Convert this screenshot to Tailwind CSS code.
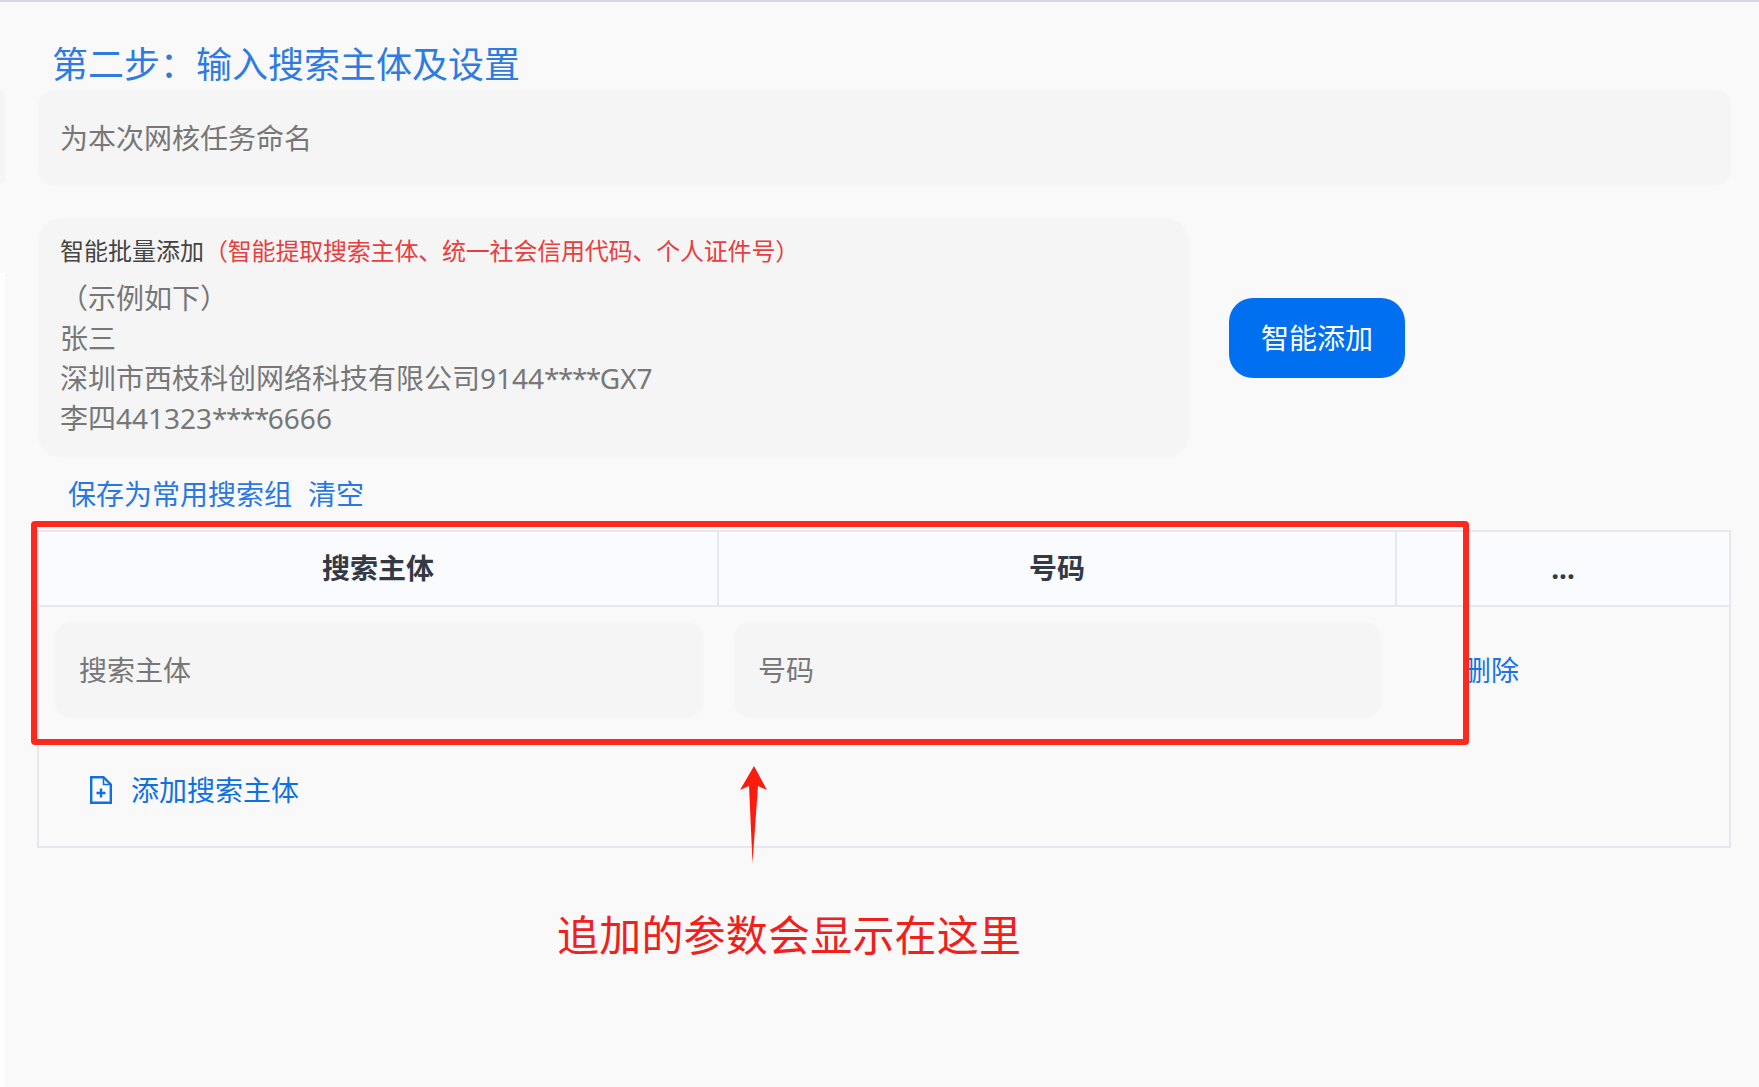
<!DOCTYPE html>
<html lang="zh-CN">
<head>
  <meta charset="UTF-8">
  <title>第二步</title>
  <script src="https://cdn.jsdelivr.net/npm/@tailwindcss/browser@4"></script>
</head>
<body class="relative h-[1087px] overflow-hidden bg-[#f9f9f9] font-['Noto_Sans','Noto_Sans_CJK_SC',sans-serif] text-[28px] text-[#777]">
  <div class="h-[2px] bg-[#d8d8de]"></div>

  <!-- cut off card of the previous step, left edge -->
  <div class="absolute left-0 top-[90px] h-[94px] w-[5px] rounded-r-xl bg-[#f5f5f5]"></div>
  <div class="absolute left-0 top-[273px] bottom-0 w-[5px] bg-[#fefefe]"></div>

  <main class="pl-[38px] pr-[28px]">
    <h2 class="pl-[14px] pt-[38px] text-[36px] leading-[50px] text-[#2f7bdf]">第二步：输入搜索主体及设置</h2>

    <div class="flex h-[94px] items-center rounded-2xl bg-[#f5f5f5] px-[22px] pt-[2px] shadow-[0_2px_3px_rgba(0,0,0,0.02)]">为本次网核任务命名</div>

    <div class="mt-[34px] flex h-[240px] items-center gap-10">
      <div class="h-[238px] w-[1151px] self-start rounded-3xl bg-[#f5f5f5] px-[22px] pt-[15px] shadow-[0_2px_3px_rgba(0,0,0,0.02)]">
        <p class="text-[24px] leading-9 text-[#444]">智能批量添加<span class="tracking-[-0.2px] text-[#e5403f]">（智能提取搜索主体、统一社会信用代码、个人证件号）</span></p>
        <div class="mt-[9px] leading-10">
          <p>（示例如下）</p>
          <p>张三</p>
          <p>深圳市西枝科创网络科技有限公司9144<span class="tracking-[-1.5px]">****</span>GX7</p>
          <p>李四441323<span class="tracking-[-1.5px]">****</span>6666</p>
        </div>
      </div>
      <button class="h-20 w-44 rounded-3xl bg-[#0070f0] text-white">智能添加</button>
    </div>

    <div class="mt-4 flex gap-4 pl-[30px] leading-10 text-[#2a78e0]">
      <a>保存为常用搜索组</a>
      <a>清空</a>
    </div>

    <div class="mt-4 -ml-px h-[318px] border-2 border-[#e8e8ec]">
      <div class="grid h-[75px] grid-cols-[680px_678px_1fr] border-b-2 border-[#e8e8ec] bg-[#fafbfe] font-bold text-[#333a45]">
        <div class="flex items-center justify-center border-r-2 border-[#e8e8ec] pb-[2px]">搜索主体</div>
        <div class="flex items-center justify-center border-r-2 border-[#e8e8ec] pb-[2px]">号码</div>
        <div class="flex items-center justify-center pb-[2px]">...</div>
      </div>
      <div class="grid h-[128px] grid-cols-[680px_678px_1fr] items-start pt-[15px]">
        <div class="pl-[16px] pr-[16px]">
          <div class="flex h-[94px] items-center rounded-2xl bg-[#f5f5f5] pl-[24px] pt-[2px] shadow-[0_2px_3px_rgba(0,0,0,0.02)]">搜索主体</div>
        </div>
        <div class="pl-[15px] pr-[16px]">
          <div class="flex h-[94px] items-center rounded-2xl bg-[#f5f5f5] pl-[24px] pt-[2px] shadow-[0_2px_3px_rgba(0,0,0,0.02)]">号码</div>
        </div>
        <a class="pl-[66px] leading-[96px] text-[#1a73e0]">删除</a>
      </div>
      <div class="flex h-[110px] items-center gap-[19px] pl-[51px] text-[#0f70e0]">
        <svg width="22" height="28" viewBox="0 0 22 28" fill="none" stroke="#0f70e0" stroke-width="2.4">
          <path d="M1.2 1.2H13.5L20.8 8.5V26.8H1.2Z"/>
          <path d="M13.5 1.2V8.5H20.8" stroke-width="1.6"/>
          <path d="M6.5 17H15.5M11 12.5V21.5"/>
        </svg>
        <span>添加搜索主体</span>
      </div>
    </div>
  </main>

  <!-- red annotation laid over the page -->
  <div class="absolute left-[31px] top-[521px] h-[224px] w-[1438px] rounded-[4px] border-[6px] border-[#fb2a1c]"></div>
  <svg class="absolute left-[738px] top-[764px]" width="32" height="102" viewBox="738 764 32 102">
    <path d="M754 766L767 790L758 786L752.5 863L749 786L740 790Z" fill="#fb1c10"/>
  </svg>
  <div class="absolute left-[557px] top-[905px] text-[42px] leading-[60px] tracking-[0.2px] text-[#f0201c]">追加的参数会显示在这里</div>
</body>
</html>
